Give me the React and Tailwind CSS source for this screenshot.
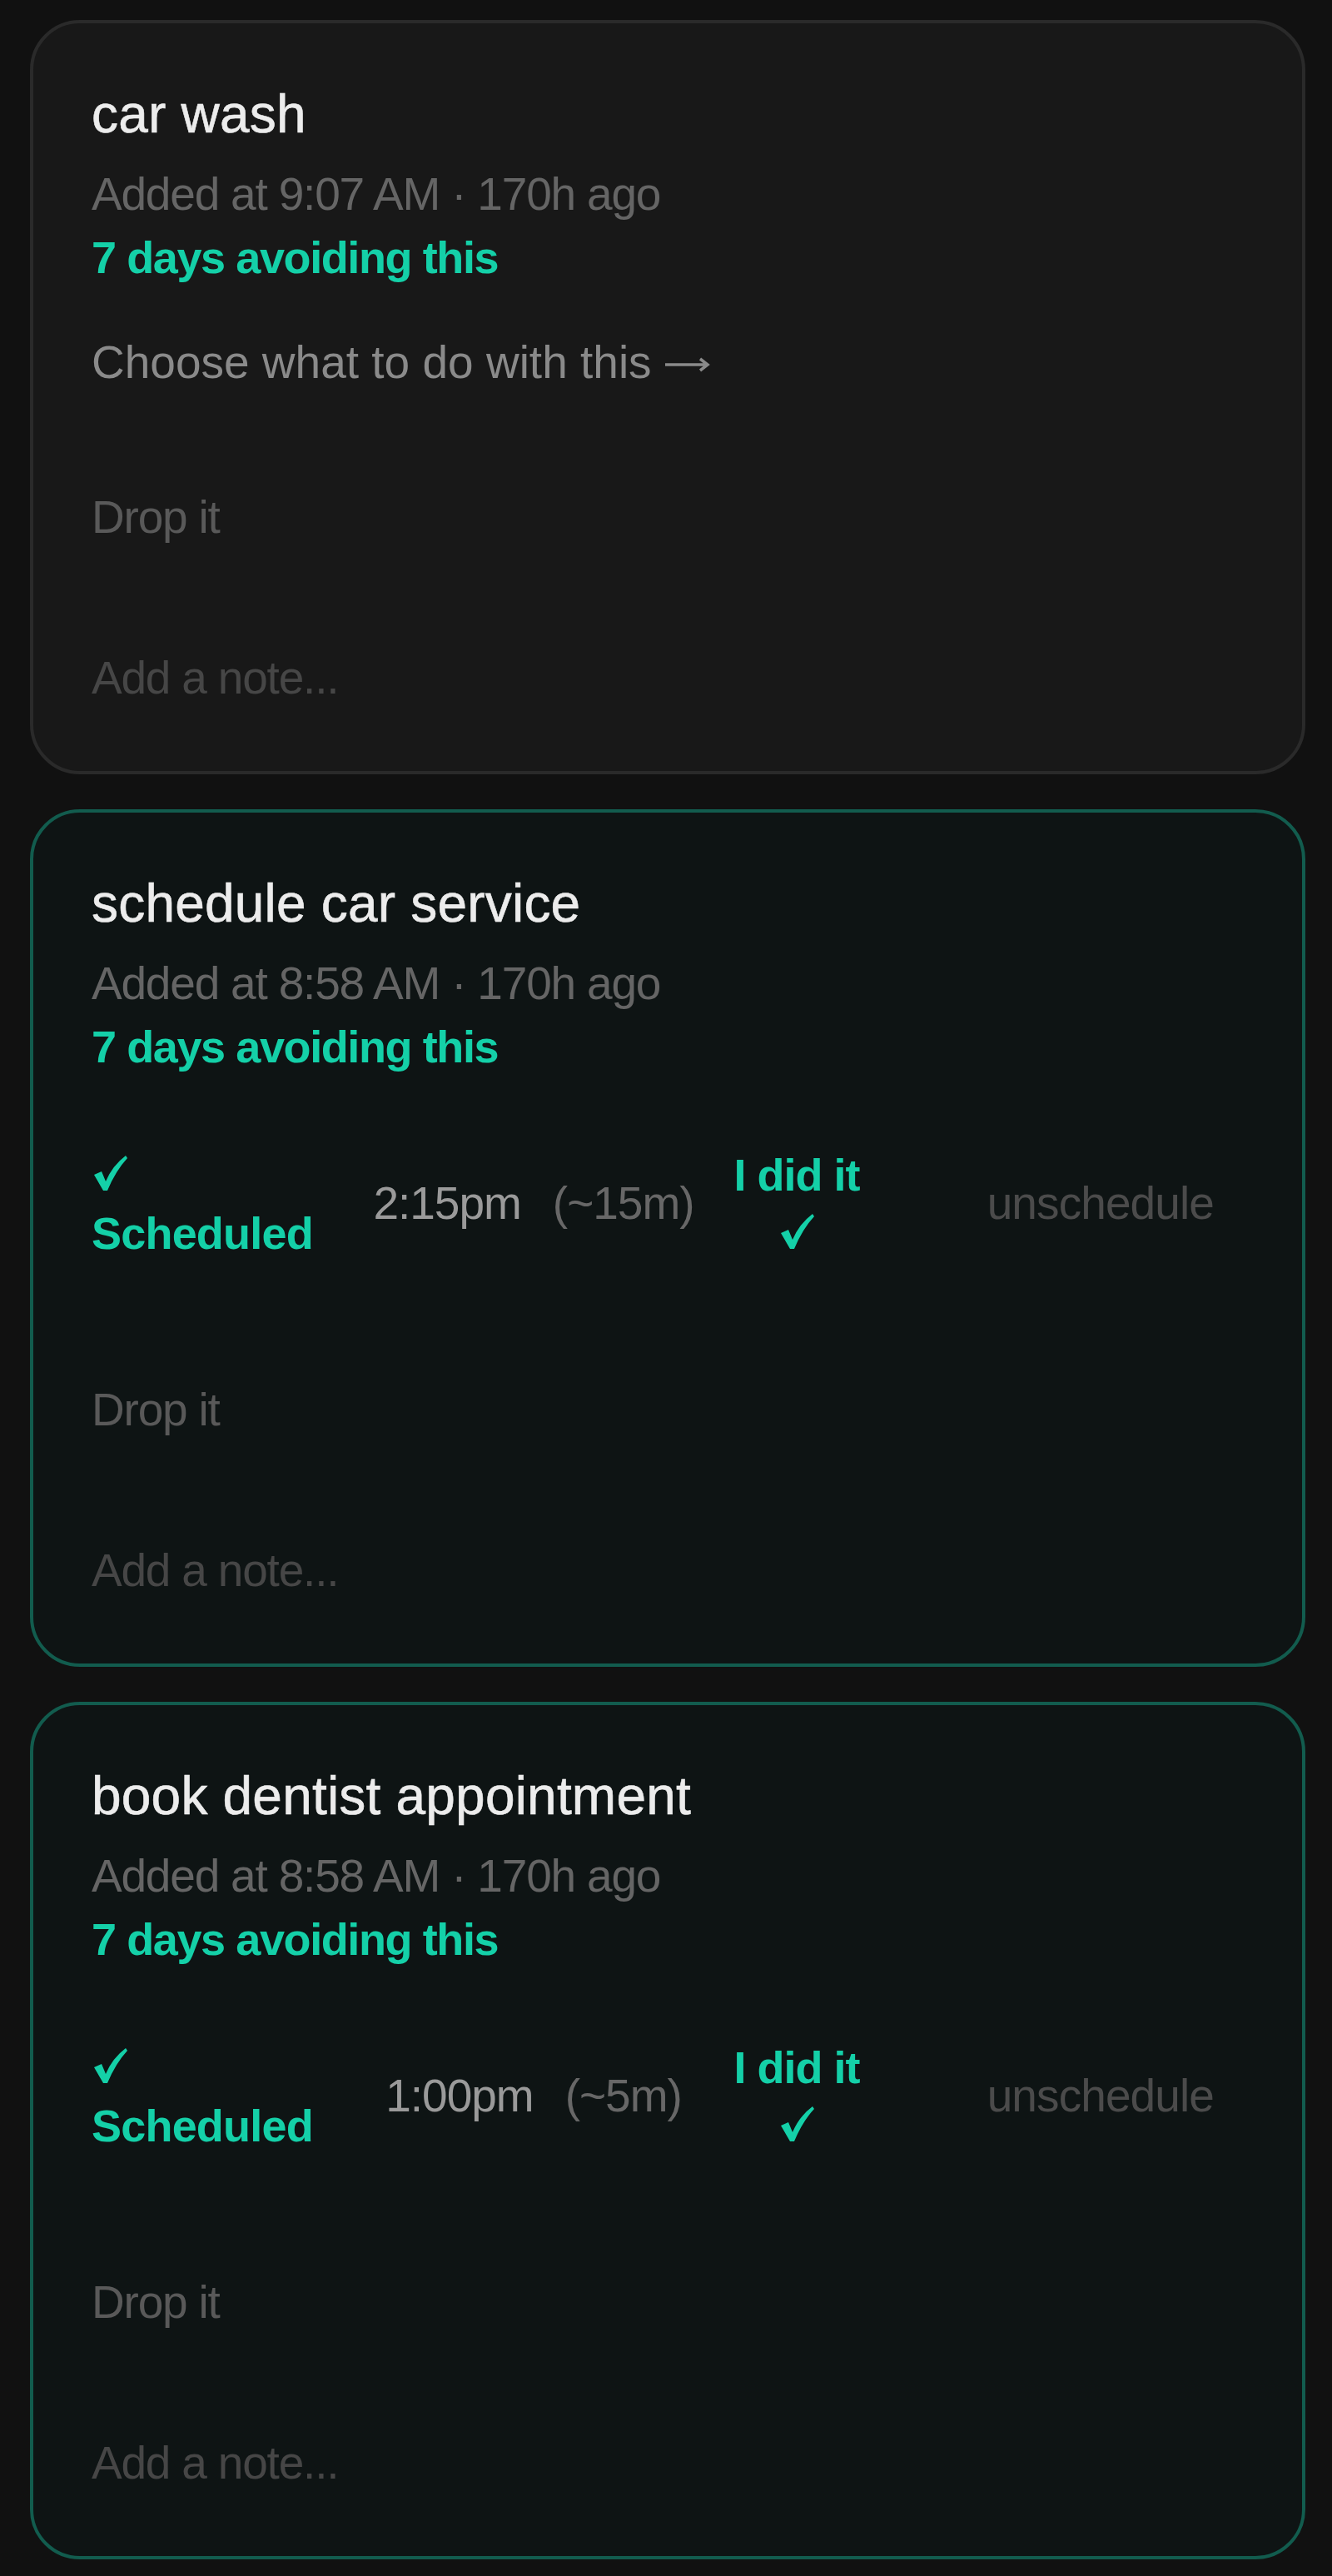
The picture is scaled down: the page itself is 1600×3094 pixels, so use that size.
import React from 'react';

const tasks = [
  { id: 1, title: 'car wash', added: '9:07 AM', scheduled: null },
  { id: 2, title: 'schedule car service', added: '8:58 AM', scheduled: { time: '2:15pm', est: '(~15m)' } },
  { id: 3, title: 'book dentist appointment', added: '8:58 AM', scheduled: { time: '1:00pm', est: '(~5m)' } },
];

// heavy tick used in the schedule row
const Tick = () => (
  <svg width="44" height="46" viewBox="0 0 44 46" className="inline-block" aria-hidden="true">
    <path d="M3 25 L12 21 L17 33 Q25 14 41 2 L43 5 Q29 20 19 44 L14 44 Z" fill="#14d0a8" />
  </svg>
);

const Arrow = () => (
  <svg width="56" height="20" viewBox="0 0 56 20" className="ml-[14px] inline-block align-[6px]" aria-hidden="true">
    <path d="M2 10 H52 M44 3 L53 10 L44 17" fill="none" stroke="#8a8a8a" strokeWidth="3.5" />
  </svg>
);

const ScheduleRow = ({ time, est }) => (
  <div className="mt-[78px] flex h-[144px] items-center">
    <div className="w-[290px] text-[54px] font-bold leading-[72px] tracking-[-0.8px] text-[#14d0a8]">
      <div className="flex h-[72px] items-center">
        <Tick />
      </div>
      <div>Scheduled</div>
    </div>
    <div className="w-[472px] pl-[10px] text-center text-[55px] leading-[76px] tracking-[-1px]">
      <span className="text-[#9a9a9a]">{time}</span>
      <span className="ml-[38px] text-[#676767]">{est}</span>
    </div>
    <button type="button" className="flex w-[170px] flex-col items-center text-[54px] font-bold leading-[67px] tracking-[-1px] text-[#14d0a8]">
      <span>I did it</span>
      <span className="flex h-[67px] items-center">
        <Tick />
      </span>
    </button>
    <button type="button" className="ml-auto pr-[36px] text-[55px] leading-[76px] tracking-[-0.9px] text-[#4b4b4b]">
      unschedule
    </button>
  </div>
);

const TaskCard = ({ task }) => {
  const s = task.scheduled;
  return (
    <div
      className={`rounded-[60px] border-4 pb-[74px] pl-[70px] pr-[70px] pt-[65px] ${
        s ? 'border-[#125c4e] bg-[#0e1414]' : 'border-[#2a2a2a] bg-[#181818]'
      }`}
    >
      <h2 className="text-[64px] leading-[88px] tracking-[0.2px] text-[#ececec] [-webkit-text-stroke:0.6px_#ececec]">
        {task.title}
      </h2>
      <p className="mt-[14px] text-[55px] leading-[76px] tracking-[-1.2px] text-[#656565]">
        Added at {task.added} · 170h ago
      </p>
      <p className="text-[54px] font-bold leading-[76px] tracking-[-1.4px] text-[#14d0a8]">7 days avoiding this</p>

      {s ? (
        <ScheduleRow time={s.time} est={s.est} />
      ) : (
        <p className="mt-[50px] h-[76px] text-[55px] leading-[76px] tracking-[0px] text-[#8a8a8a]">
          Choose what to do with this
          <Arrow />
        </p>
      )}

      <button
        type="button"
        className={`${s ? 'mt-[138px]' : 'mt-[110px]'} block text-left text-[55px] leading-[76px] tracking-[-1.2px] text-[#595959]`}
      >
        Drop it
      </button>
      <div className="mt-[117px] text-[55px] leading-[76px] tracking-[-1.2px] text-[#464646]">Add a note...</div>
    </div>
  );
};

export default function App() {
  return (
    <div className="min-h-screen bg-[#111111] pb-[20px] pl-[36px] pr-[32px] pt-[24px] font-['Liberation_Sans',Arial,sans-serif]">
      <div className="flex flex-col gap-[42px]">
        {tasks.map((task) => (
          <TaskCard key={task.id} task={task} />
        ))}
      </div>
    </div>
  );
}
